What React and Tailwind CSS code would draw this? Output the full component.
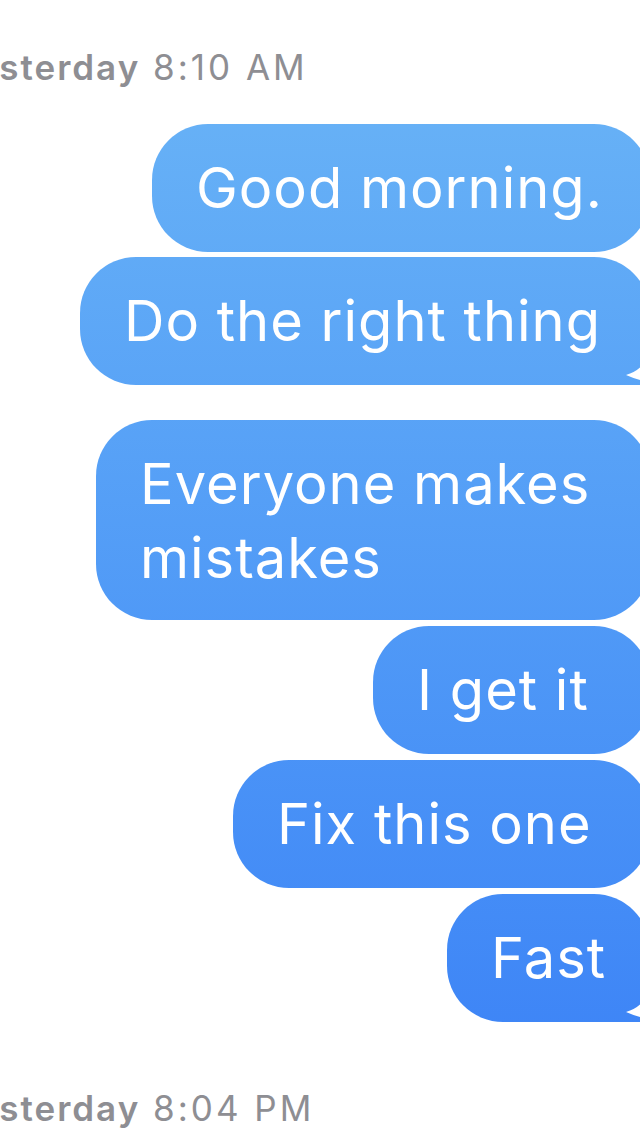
import React from "react";

const BUBBLE =
  "relative bg-fixed bg-linear-to-b from-[#6cb6f6] to-[#3a80f6] text-white text-[56px] leading-[74px] tracking-[1px] pl-[44px]";

function Notch() {
  return (
    <svg
      className="absolute right-0 bottom-0"
      width="30"
      height="44"
      viewBox="0 0 30 44"
      aria-hidden="true"
    >
      <path d="M30 0 Q30 27 6 34 Q17 39 30 41 Z" fill="#ffffff" />
    </svg>
  );
}

function Stamp({ day, time }) {
  return (
    <div className="text-[35px] leading-[44px] text-[#8e8e93] whitespace-nowrap ml-[-47px] tracking-[2px]">
      <span className="font-semibold">{day}</span>
      <span className="font-normal tracking-[3px]"> {time}</span>
    </div>
  );
}

export default function App() {
  return (
    <div
      className="w-[640px] h-[1136px] overflow-hidden bg-white flex flex-col"
      style={{ fontFamily: "Inter, 'Liberation Sans', sans-serif" }}
    >
      <div className="mt-[45px]">
        <Stamp day="Yesterday" time="8:10 AM" />
      </div>

      <div className="flex flex-col items-end mr-[-10px] mt-[35px]">
        <div className={`${BUBBLE} w-[498px] rounded-[56px] py-[27px] whitespace-nowrap`}>
          Good morning.
        </div>
        <div
          className={`${BUBBLE} w-[570px] mt-[5px] rounded-l-[56px] rounded-tr-[56px] py-[27px] whitespace-nowrap`}
        >
          Do the right thing
          <Notch />
        </div>
        <div className={`${BUBBLE} w-[554px] mt-[35px] rounded-[56px] pt-[27px] pb-[25px]`}>
          Everyone makes
          <br />
          mistakes
        </div>
        <div className={`${BUBBLE} w-[277px] mt-[6px] rounded-[56px] py-[27px] whitespace-nowrap`}>
          I get it
        </div>
        <div className={`${BUBBLE} w-[417px] mt-[6px] rounded-[56px] py-[27px] whitespace-nowrap`}>
          Fix this one
        </div>
        <div
          className={`${BUBBLE} w-[203px] mt-[6px] rounded-l-[56px] rounded-tr-[56px] py-[27px] whitespace-nowrap`}
        >
          Fast
          <Notch />
        </div>
      </div>

      <div className="mt-[64px]">
        <Stamp day="Yesterday" time="8:04 PM" />
      </div>
    </div>
  );
}
